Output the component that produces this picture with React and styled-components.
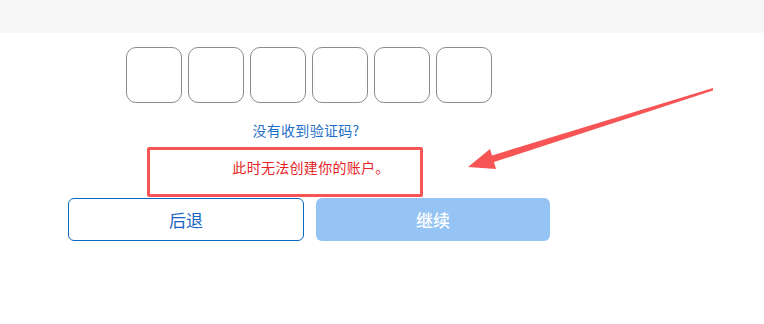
import React from 'react'
import styled, { createGlobalStyle } from 'styled-components'

const GlobalStyle = createGlobalStyle`
  html, body {
    margin: 0;
    padding: 0;
    background: #ffffff;
    font-family: "Noto Sans CJK SC", "Noto Sans", sans-serif;
  }
`

export default function App() {
  const cells = [0, 1, 2, 3, 4, 5]
  return (
    <Page>
      <GlobalStyle />
      <TopBar />
      <Main>
        <CodeRow>
          {cells.map(i => (
            <CodeCell key={i} maxLength={1} />
          ))}
        </CodeRow>
        <ResendLink href="#">没有收到验证码?</ResendLink>
        <ErrorText>此时无法创建你的账户。</ErrorText>
        <ButtonRow>
          <BackButton>后退</BackButton>
          <NextButton disabled>继续</NextButton>
        </ButtonRow>
      </Main>

      <Highlight />
      <Arrow viewBox="0 0 764 324">
        <polygon
          points="713,88 492,155.5 490,149 468,167 496,169 494,162 713,90.5"
          fill="#f75555"
        />
      </Arrow>
    </Page>
  )
}

const Page = styled.div`
  position: relative;
  width: 764px;
  height: 324px;
  overflow: hidden;
`
const TopBar = styled.div`
  height: 33px;
  background: #f7f7f7;
`
const Main = styled.div`
  width: 482px;
  margin-left: 68px;
  display: flex;
  flex-direction: column;
  align-items: center;
`
const CodeRow = styled.div`
  display: flex;
  gap: 6px;
  margin-top: 14px;
`
const CodeCell = styled.input`
  box-sizing: border-box;
  width: 56px;
  height: 56px;
  border: 1px solid #8c8c8c;
  border-radius: 10px;
  background: #fff;
  outline: none;
  padding: 0;
`
const ResendLink = styled.a`
  margin-top: 17px;
  margin-right: 6px;
  font-size: 14px;
  letter-spacing: 0.3px;
  line-height: 20px;
  color: #1f6fc8;
  text-decoration: none;
`
const ErrorText = styled.div`
  margin-top: 17px;
  margin-left: 4px;
  font-size: 14px;
  letter-spacing: 0.3px;
  line-height: 20px;
  color: #e61e28;
`
const ButtonRow = styled.div`
  display: flex;
  gap: 12px;
  width: 100%;
  margin-top: 21px;
`
const BaseButton = styled.button`
  flex: 1;
  box-sizing: border-box;
  height: 43px;
  border-radius: 6px;
  font-family: inherit;
  font-size: 17px;
  cursor: pointer;
`
const BackButton = styled(BaseButton)`
  background: #ffffff;
  border: 1px solid #0b67c2;
  color: #1766c4;
`
const NextButton = styled(BaseButton)`
  background: #95c3f3;
  border: none;
  color: #ffffff;
  font-weight: 500;
  cursor: default;
`
const Highlight = styled.div`
  position: absolute;
  left: 147px;
  top: 147px;
  width: 276px;
  height: 50px;
  box-sizing: border-box;
  border: 3px solid #f75555;
  border-radius: 2px;
  pointer-events: none;
`
const Arrow = styled.svg`
  position: absolute;
  left: 0;
  top: 0;
  width: 764px;
  height: 324px;
  pointer-events: none;
`
